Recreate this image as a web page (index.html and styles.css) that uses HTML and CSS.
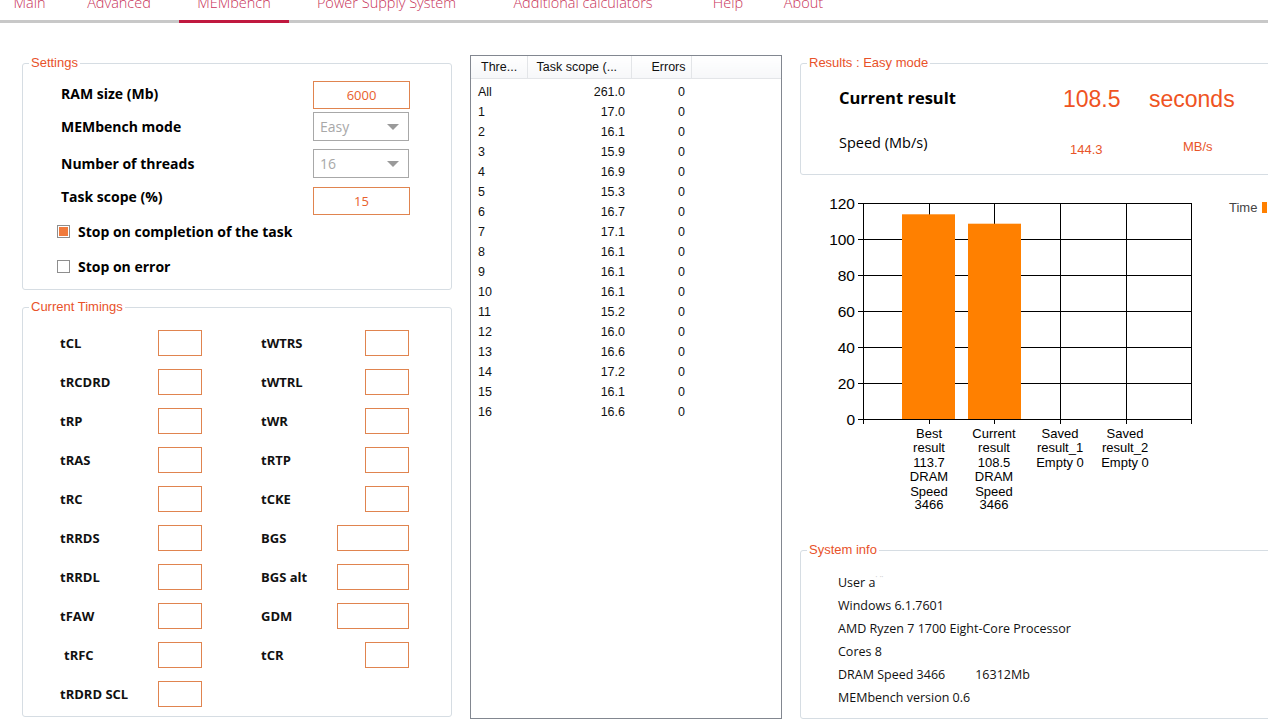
FILE: index.html
```html
<!DOCTYPE html>
<html lang="en">
<head>
    <meta charset="UTF-8">
    <title>MEMbench</title>
    <link rel="stylesheet" href="styles.css">
</head>
<body>
    <nav class="tabs">
        <a class="tab">Main</a>
        <a class="tab">Advanced</a>
        <a class="tab active">MEMbench</a>
        <a class="tab">Power Supply System</a>
        <a class="tab">Additional calculators</a>
        <a class="tab">Help</a>
        <a class="tab">About</a>
    </nav>

    <main class="workspace">
        <div class="col-left">
            <fieldset class="group settings">
                <legend>Settings</legend>
                <div class="settings-grid">
                    <label class="lbl-top">RAM size (Mb)</label>
                    <div class="num-box">6000</div>
                    <label>MEMbench mode</label>
                    <div class="combo">Easy<span class="arrow"></span></div>
                    <label>Number of threads</label>
                    <div class="combo">16<span class="arrow"></span></div>
                    <label class="lbl-last">Task scope (%)</label>
                    <div class="num-box">15</div>
                </div>
                <div class="check-row first"><span class="check on"></span>Stop on completion of the task</div>
                <div class="check-row"><span class="check"></span>Stop on error</div>
            </fieldset>

            <fieldset class="group timings">
                <legend>Current Timings</legend>
                <div class="timing-grid">
                    <span class="t-label">tCL</span><span class="t-box"></span><span></span>
                    <span class="t-label">tWTRS</span><span class="t-box"></span>

                    <span class="t-label">tRCDRD</span><span class="t-box"></span><span></span>
                    <span class="t-label">tWTRL</span><span class="t-box"></span>

                    <span class="t-label">tRP</span><span class="t-box"></span><span></span>
                    <span class="t-label">tWR</span><span class="t-box"></span>

                    <span class="t-label">tRAS</span><span class="t-box"></span><span></span>
                    <span class="t-label">tRTP</span><span class="t-box"></span>

                    <span class="t-label">tRC</span><span class="t-box"></span><span></span>
                    <span class="t-label">tCKE</span><span class="t-box"></span>

                    <span class="t-label">tRRDS</span><span class="t-box"></span><span></span>
                    <span class="t-label">BGS</span><span class="t-box wide"></span>

                    <span class="t-label">tRRDL</span><span class="t-box"></span><span></span>
                    <span class="t-label">BGS alt</span><span class="t-box wide"></span>

                    <span class="t-label">tFAW</span><span class="t-box"></span><span></span>
                    <span class="t-label">GDM</span><span class="t-box wide"></span>

                    <span class="t-label indent">tRFC</span><span class="t-box"></span><span></span>
                    <span class="t-label">tCR</span><span class="t-box"></span>

                    <span class="t-label">tRDRD SCL</span><span class="t-box"></span>
                </div>
            </fieldset>
        </div>

        <div class="thread-list">
            <table>
                <thead>
                    <tr><th class="c-thread">Thre...</th><th class="c-scope">Task scope (...</th><th class="c-err">Errors</th><th class="c-fill"></th></tr>
                </thead>
                <tbody>
                    <tr><td>All</td><td class="num">261.0</td><td class="num">0</td><td></td></tr>
                    <tr><td>1</td><td class="num">17.0</td><td class="num">0</td><td></td></tr>
                    <tr><td>2</td><td class="num">16.1</td><td class="num">0</td><td></td></tr>
                    <tr><td>3</td><td class="num">15.9</td><td class="num">0</td><td></td></tr>
                    <tr><td>4</td><td class="num">16.9</td><td class="num">0</td><td></td></tr>
                    <tr><td>5</td><td class="num">15.3</td><td class="num">0</td><td></td></tr>
                    <tr><td>6</td><td class="num">16.7</td><td class="num">0</td><td></td></tr>
                    <tr><td>7</td><td class="num">17.1</td><td class="num">0</td><td></td></tr>
                    <tr><td>8</td><td class="num">16.1</td><td class="num">0</td><td></td></tr>
                    <tr><td>9</td><td class="num">16.1</td><td class="num">0</td><td></td></tr>
                    <tr><td>10</td><td class="num">16.1</td><td class="num">0</td><td></td></tr>
                    <tr><td>11</td><td class="num">15.2</td><td class="num">0</td><td></td></tr>
                    <tr><td>12</td><td class="num">16.0</td><td class="num">0</td><td></td></tr>
                    <tr><td>13</td><td class="num">16.6</td><td class="num">0</td><td></td></tr>
                    <tr><td>14</td><td class="num">17.2</td><td class="num">0</td><td></td></tr>
                    <tr><td>15</td><td class="num">16.1</td><td class="num">0</td><td></td></tr>
                    <tr><td>16</td><td class="num">16.6</td><td class="num">0</td><td></td></tr>
                </tbody>
            </table>
        </div>

        <div class="col-right">
            <fieldset class="group results">
                <legend>Results : Easy mode</legend>
                <div class="res-row main">
                    <span class="res-label">Current result</span>
                    <span class="res-value">108.5</span>
                    <span class="res-unit">seconds</span>
                </div>
                <div class="res-row speed">
                    <span class="res-label">Speed (Mb/s)</span>
                    <span class="res-value">144.3</span>
                    <span class="res-unit">MB/s</span>
                </div>
            </fieldset>

            <svg class="chart" width="470" height="362" viewBox="0 0 470 362">
                <!-- grid -->
                <g stroke="#000" stroke-width="1" shape-rendering="crispEdges">
                    <line x1="58" y1="22.5" x2="391" y2="22.5"/>
                    <line x1="58" y1="58.5" x2="391" y2="58.5"/>
                    <line x1="58" y1="94.5" x2="391" y2="94.5"/>
                    <line x1="58" y1="130.5" x2="391" y2="130.5"/>
                    <line x1="58" y1="166.5" x2="391" y2="166.5"/>
                    <line x1="58" y1="202.5" x2="391" y2="202.5"/>
                    <line x1="58" y1="238.5" x2="391" y2="238.5"/>
                    <line x1="63.5" y1="22" x2="63.5" y2="243"/>
                    <line x1="129.5" y1="22" x2="129.5" y2="243"/>
                    <line x1="194.5" y1="22" x2="194.5" y2="243"/>
                    <line x1="260.5" y1="22" x2="260.5" y2="243"/>
                    <line x1="326.5" y1="22" x2="326.5" y2="243"/>
                    <line x1="391.5" y1="22" x2="391.5" y2="243"/>
                </g>
                <!-- bars: 1.8px per second -->
                <rect x="102" y="33.3" width="53" height="204.7" fill="#ff8000"/>
                <rect x="168" y="42.7" width="53" height="195.3" fill="#ff8000"/>

                <g class="y-axis" text-anchor="end">
                    <text x="55" y="28">120</text>
                    <text x="55" y="64">100</text>
                    <text x="55" y="100">80</text>
                    <text x="55" y="136">60</text>
                    <text x="55" y="172">40</text>
                    <text x="55" y="208">20</text>
                    <text x="55" y="244">0</text>
                </g>
                <g class="x-axis" text-anchor="middle">
                    <text x="129" y="257">Best</text>
                    <text x="129" y="271">result</text>
                    <text x="129" y="286">113.7</text>
                    <text x="129" y="300">DRAM</text>
                    <text x="129" y="315">Speed</text>
                    <text x="129" y="328">3466</text>

                    <text x="194" y="257">Current</text>
                    <text x="194" y="271">result</text>
                    <text x="194" y="286">108.5</text>
                    <text x="194" y="300">DRAM</text>
                    <text x="194" y="315">Speed</text>
                    <text x="194" y="328">3466</text>

                    <text x="260" y="257">Saved</text>
                    <text x="260" y="271">result_1</text>
                    <text x="260" y="286">Empty 0</text>

                    <text x="325" y="257">Saved</text>
                    <text x="325" y="271">result_2</text>
                    <text x="325" y="286">Empty 0</text>
                </g>
                <text class="legend-text" x="429" y="31">Time</text>
                <rect x="462" y="21" width="5" height="11" fill="#ff8000"/>
            </svg>

            <fieldset class="group sysinfo">
                <legend>System info</legend>
                <div class="info-line">User a<span class="masked">&#729; &#729;&#729;</span></div>
                <div class="info-line">Windows 6.1.7601</div>
                <div class="info-line">AMD Ryzen 7 1700 Eight-Core Processor</div>
                <div class="info-line">Cores 8</div>
                <div class="info-line">DRAM Speed 3466<span class="mem-size">16312Mb</span></div>
                <div class="info-line">MEMbench version 0.6</div>
            </fieldset>
        </div>
    </main>
</body>
</html>
```

FILE: styles.css
```css
html, body {
    margin: 0;
    height: 100%;
    overflow: hidden;
    background-color: #fff;
}
body {
    font-family: "Open Sans", "Liberation Sans", sans-serif;
    color: #000;
}

/* top tab strip */
.tabs {
    display: grid;
    grid-template-columns: 59px 120px 110px 195px 198px 92px 59px;
    margin-top: -6px;
    border-bottom: 3px solid #c8c8c8;
}
.tab {
    text-align: center;
    font-size: 14.5px;
    font-weight: 300;
    line-height: 18px;
    padding-bottom: 8px;
    color: #c8345a;
    white-space: nowrap;
}
.tab.active {
    border-bottom: 3px solid #c0183f;
    margin-bottom: -3px;
}

.workspace {
    display: flex;
    align-items: flex-start;
    gap: 18px;
    padding: 32px 0 0 22px;
}

/* group boxes: the legend sits at the content edge, so side padding stays 0
   and the rows carry their own indent */
.group {
    margin: 0;
    padding: 0;
    border: 1px solid #d6dde3;
    border-radius: 3px;
    min-width: 0;
    box-sizing: border-box;
}
.group legend {
    margin-left: 6px;
    padding: 0 2px;
    font-family: "Liberation Sans", Arial, sans-serif;
    font-size: 13px;
    line-height: 14px;
    color: #e8522a;
}

.col-left {
    width: 430px;
    flex-shrink: 0;
    display: flex;
    flex-direction: column;
    gap: 10px;
}
.settings {
    margin-top: 1px;
    padding: 11px 0 13px 0;
}
.settings-grid {
    display: grid;
    grid-template-columns: 252px 97px;
    grid-template-rows: 31px 37px 38px 28px;
    align-items: start;
    margin-left: 38px;
}
.settings-grid label {
    font-weight: 700;
    font-size: 14px;
    line-height: 29px;
}
.settings-grid .lbl-top {
    line-height: 25px;
}
.settings-grid .lbl-last {
    line-height: 20px;
}
.num-box {
    height: 28px;
    box-sizing: border-box;
    border: 1px solid #e0844f;
    color: #e8612c;
    text-align: center;
    font-size: 13px;
    line-height: 26px;
}
.combo {
    position: relative;
    height: 29px;
    width: 96px;
    box-sizing: border-box;
    border: 1px solid #a8a8a8;
    color: #a8a8a8;
    padding-left: 6px;
    font-size: 14px;
    line-height: 27px;
}
.combo .arrow {
    position: absolute;
    right: 9px;
    top: 11px;
    border-left: 6px solid transparent;
    border-right: 6px solid transparent;
    border-top: 6px solid #9a9a9a;
}
.check-row {
    display: flex;
    align-items: center;
    gap: 8px;
    margin-left: 34px;
    height: 20px;
    margin-top: 15px;
    font-weight: 700;
    font-size: 14px;
}
.check-row.first {
    margin-top: 6px;
}
.check {
    width: 13px;
    height: 13px;
    box-sizing: border-box;
    border: 1px solid #8e8e8e;
    background: #fff;
}
.check.on {
    padding: 1px;
    background: #f07a3c content-box;
}

.timings {
    padding: 16px 0 9px 0;
}
.timing-grid {
    display: grid;
    grid-template-columns: 98px 44px 59px 76px 72px;
    grid-auto-rows: 26px;
    row-gap: 13px;
    align-items: center;
    margin-left: 37px;
}
.t-label {
    font-weight: 700;
    font-size: 13px;
    line-height: 30px;
    color: #111;
}
.t-label.indent {
    padding-left: 4px;
}
.t-box {
    height: 26px;
    width: 44px;
    box-sizing: border-box;
    border: 1px solid #e0844f;
    justify-self: end;
}
.t-box.wide {
    width: 72px;
}

/* thread results list */
.thread-list {
    width: 312px;
    height: 664px;
    box-sizing: border-box;
    border: 1px solid #828790;
    flex-shrink: 0;
    overflow: hidden;
}
.thread-list table {
    width: 100%;
    border-collapse: collapse;
    font-family: "Liberation Sans", Arial, sans-serif;
    font-size: 12.5px;
}
.thread-list th {
    height: 22px;
    padding: 0;
    font-weight: 400;
    text-align: left;
    color: #111;
    background: linear-gradient(#fff, #f6f7f9);
    border-bottom: 1px solid #e3e5e8;
    border-right: 1px solid #e3e5e8;
    white-space: nowrap;
}
.thread-list th.c-thread { width: 56px; padding-left: 10px; box-sizing: border-box; }
.thread-list th.c-scope { width: 104px; padding-left: 9px; box-sizing: border-box; }
.thread-list th.c-err { width: 60px; text-align: right; padding-right: 5px; box-sizing: border-box; }
.thread-list th.c-fill { border-right: none; }
.thread-list td {
    height: 20px;
    padding: 0 0 0 7px;
    color: #111;
}
.thread-list td.num {
    text-align: right;
    padding: 0 6px 0 0;
}
.thread-list tbody tr:first-child td {
    padding-top: 3px;
}

/* right column */
.col-right {
    width: 490px;
    flex-shrink: 0;
    display: flex;
    flex-direction: column;
}
.results {
    margin-top: 1px;
    height: 119px;
    padding: 13px 0 0 0;
}
.res-row {
    display: flex;
    align-items: baseline;
    padding-left: 38px;
}
.res-row.main {
    height: 30px;
}
.res-row.main .res-label {
    width: 224px;
    font-weight: 700;
    font-size: 16.5px;
}
.res-row.main .res-value,
.res-row.main .res-unit {
    font-family: "Liberation Sans", Arial, sans-serif;
    font-size: 23px;
    color: #ef5322;
    position: relative;
    top: 3px;
}
.res-row.main .res-value {
    width: 86px;
}
.res-row.speed {
    margin-top: 20px;
}
.res-row.speed .res-label {
    width: 231px;
    font-size: 14.5px;
}
.res-row.speed .res-value,
.res-row.speed .res-unit {
    font-family: "Liberation Sans", Arial, sans-serif;
    font-size: 13px;
    color: #e8552a;
    position: relative;
    top: 3px;
}
.res-row.speed .res-value {
    width: 113px;
    top: 6px;
}

.chart {
    display: block;
    margin-top: 6px;
}
.chart text {
    font-family: "Liberation Sans", Arial, sans-serif;
    fill: #000;
}
.chart .y-axis text {
    font-size: 15.5px;
}
.chart .x-axis text {
    font-size: 13px;
}
.chart .legend-text {
    font-size: 13px;
    fill: #444;
}

.sysinfo {
    height: 176px;
    padding: 12px 0 0 0;
}
.info-line {
    font-size: 12.5px;
    line-height: 23px;
    color: #111;
    padding-left: 37px;
}
.masked {
    color: #ccc;
    font-size: 10px;
    vertical-align: 3px;
}
.mem-size {
    margin-left: 30px;
}
```
